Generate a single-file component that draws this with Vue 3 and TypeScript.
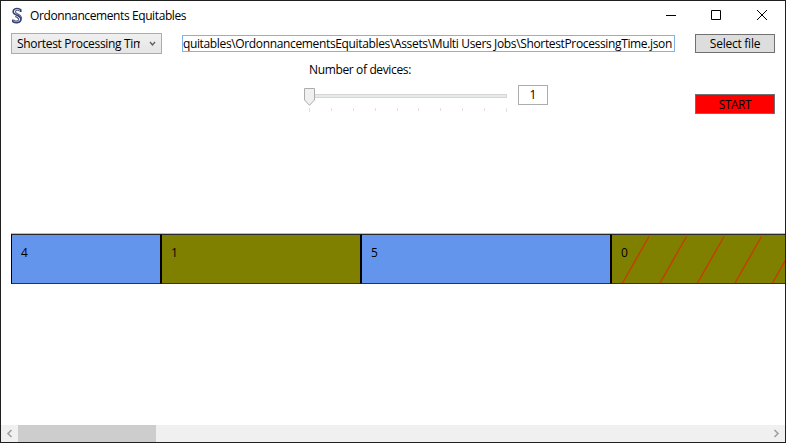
<script setup lang="ts">
import { ref } from 'vue'

interface Job {
  id: number
  width: number
  color: 'blue' | 'olive'
  hatched?: boolean
}

const title = 'Ordonnancements Equitables'
const algorithm = ref('Shortest Processing Time')
const path = ref('quitables\\OrdonnancementsEquitables\\Assets\\Multi Users Jobs\\ShortestProcessingTime.json')
const devices = ref(1)
const ticks = Array.from({ length: 10 }, (_, i) => i)
const jobs: Job[] = [
  { id: 4, width: 150, color: 'blue' },
  { id: 1, width: 200, color: 'olive' },
  { id: 5, width: 250, color: 'blue' },
  { id: 0, width: 200, color: 'olive', hatched: true },
]
const hatches = [0, 1, 2, 3, 4]
</script>

<template>
  <div class="window">
    <header class="titlebar">
      <svg class="logo" width="12" height="18" viewBox="0 0 12 18">
        <path class="outer" d="M9.8 5V2.8C8 1 4 1 2.6 3C1.4 5.2 2.6 6.8 5 7.8C8.6 9.2 10.6 10.6 9.8 13.4C8.6 16.2 4 16.2 1.8 14.6V12.6" />
        <path class="inner" d="M8.8 4.2C7 2.8 4.8 3 4.4 4.6C4.2 6 6 6.6 7.8 7.6C10 9 11 10.6 10.4 12.6M2.6 13C4 14.6 6.8 14.4 7.6 12.8C8 11.2 6 10.2 4.2 9.4" />
      </svg>
      <span class="text title">{{ title }}</span>
      <div class="controls">
        <svg width="46" height="29" viewBox="0 0 46 29"><path d="M11 14.5H21" /></svg>
        <svg width="46" height="29" viewBox="0 0 46 29"><path d="M10.5 9.5H19.5V18.5H10.5Z" /></svg>
        <svg width="38" height="29" viewBox="0 0 38 29"><path d="M10 9L20 19M20 9L10 19" /></svg>
      </div>
    </header>

    <div class="toolbar">
      <div class="combo">
        <span class="clip"><span class="text algorithm">{{ algorithm }}</span></span>
        <svg width="7" height="6" viewBox="0 0 7 6"><path d="M1 1L3.5 4L6 1" /></svg>
      </div>
      <div class="pathbox"><span class="text path">{{ path }}</span></div>
      <button class="button"><span class="text select">Select file</span></button>
    </div>

    <div class="settings">
      <div class="devices">
        <span class="text label">Number of devices:</span>
        <div class="sliderrow">
          <div class="slider">
            <div class="railrow">
              <svg class="thumb" width="11" height="18" viewBox="0 0 11 18"><path d="M.5 .5H10.5V12L5.5 17.3L.5 12Z" /></svg>
              <div class="rail"></div>
            </div>
            <div class="ticks"><i v-for="t in ticks" :key="t"></i></div>
          </div>
          <div class="number text">{{ devices }}</div>
        </div>
      </div>
      <button class="button start"><span class="text starttext">START</span></button>
    </div>

    <main class="timeline">
      <div v-for="job in jobs" :key="job.id" class="job" :class="job.color" :style="{ width: job.width + 'px' }">
        <span class="text jobid">{{ job.id }}</span>
        <svg v-if="job.hatched" class="hatch" width="198" height="48" viewBox="0 0 198 48">
          <path v-for="h in hatches" :key="h" :d="`M${10.5 + h * 37.5} 48L${37 + h * 37.5} 1.5`" />
        </svg>
      </div>
    </main>

    <footer class="scrollbar">
      <svg width="17" height="17" viewBox="0 0 17 17"><path d="M10.5 5L7 8.5L10.5 12" /></svg>
      <div class="scrollthumb"></div>
      <svg class="right" width="17" height="17" viewBox="0 0 17 17"><path d="M6.5 5L10 8.5L6.5 12" /></svg>
    </footer>
  </div>
</template>

<style>
body {
  margin: 0;
  overflow: hidden;
}
</style>

<style scoped>
.window {
  box-sizing: border-box;
  width: 786px;
  height: 443px;
  border: 1px solid #202020;
  background: #fff;
  display: flex;
  flex-direction: column;
  overflow: hidden;
  color: #000;
}
svg {
  display: block;
  flex: none;
  fill: none;
}
.text {
  font-family: "Open Sans", "Noto Sans", sans-serif;
  font-size: 12px;
  line-height: 16px;
  white-space: pre;
}
.titlebar {
  height: 32px;
  flex: none;
  display: flex;
  align-items: flex-start;
  padding-left: 10px;
}
.logo {
  margin-top: 6px;
}
.outer {
  stroke: #35406f;
  stroke-width: 1.6;
}
.inner {
  stroke: #56608c;
  stroke-width: 1.2;
}
.title {
  margin: 7px 0 0 7px;
  letter-spacing: -0.4px;
}
.controls {
  display: flex;
  margin-left: auto;
}
.controls path {
  stroke: #000;
}
.toolbar {
  height: 21px;
  flex: none;
  display: flex;
  align-items: center;
  padding: 0 10px;
}
.combo {
  box-sizing: border-box;
  width: 151px;
  height: 21px;
  border: 1px solid #acacac;
  background: linear-gradient(#f0f0f0, #e5e5e5);
  display: flex;
  align-items: center;
  padding: 0 5px;
  justify-content: space-between;
}
.combo path {
  stroke: #606060;
  stroke-width: 1.4;
}
.clip {
  width: 123px;
  overflow: hidden;
  display: flex;
}
.algorithm {
  letter-spacing: -0.32px;
}
.pathbox {
  box-sizing: border-box;
  width: 493px;
  height: 17px;
  margin: 0 20px;
  border: 1px solid #7eb4ea;
  display: flex;
  align-items: center;
  justify-content: flex-end;
  padding-right: 2px;
  overflow: hidden;
}
.path {
  letter-spacing: -0.35px;
}
.button {
  box-sizing: border-box;
  width: 80px;
  height: 19px;
  padding: 0;
  border: 1px solid #707070;
  border-radius: 0;
  background: #ddd;
  color: #000;
  display: flex;
  align-items: center;
  justify-content: center;
}
.select {
  letter-spacing: -0.25px;
}
.starttext {
  letter-spacing: -0.5px;
}
.settings {
  height: 180px;
  flex: none;
  display: flex;
  justify-content: space-between;
  padding: 8px 10px 0 303px;
  box-sizing: border-box;
}
.devices {
  display: flex;
  flex-direction: column;
}
.label {
  margin-left: 5px;
  letter-spacing: -0.36px;
}
.sliderrow {
  display: flex;
  align-items: flex-start;
  margin-top: 7px;
}
.slider {
  width: 203px;
  margin-top: 3px;
}
.railrow {
  display: flex;
  height: 18px;
}
.thumb path {
  fill: #f0f0f0;
  stroke: #acacac;
}
.rail {
  box-sizing: border-box;
  flex: 1;
  height: 4px;
  margin-top: 6px;
  border: 1px solid #d6d6d6;
  border-left: 0;
  background: #e7eaea;
}
.ticks {
  display: flex;
  justify-content: space-between;
  height: 4px;
  margin: 2px 0 0 5px;
}
.ticks i {
  width: 1px;
  height: 3px;
  background: #e0e0e0;
}
.ticks i:first-child,
.ticks i:last-child {
  height: 4px;
}
.number {
  box-sizing: border-box;
  width: 30px;
  height: 20px;
  margin-left: 11px;
  border: 1px solid #acacac;
  text-align: center;
  line-height: 18px;
}
.start {
  height: 20px;
  margin-top: 32px;
  padding-top: 2px;
  background: #f00;
}
.timeline {
  height: 191px;
  flex: none;
  display: flex;
  padding-left: 10px;
}
.job {
  box-sizing: border-box;
  height: 50px;
  flex: none;
  border: 1px solid #000;
  border-top-color: #292929;
  border-bottom-color: #333;
  box-shadow: 0 -1px #bdbdbd;
  display: grid;
}
.blue {
  background: #6495ed;
}
.olive {
  background: #808000;
}
.jobid {
  grid-area: 1 / 1;
  margin: 10px 0 0 9px;
}
.hatch {
  grid-area: 1 / 1;
}
.hatch path {
  stroke: #ff0000;
  stroke-opacity: 0.5;
  stroke-width: 1.5;
}
.scrollbar {
  height: 17px;
  flex: none;
  display: flex;
  background: #f0f0f0;
}
.scrollbar path {
  stroke: #a0a0a0;
  stroke-width: 1.6;
}
.scrollthumb {
  width: 138px;
  background: #cdcdcd;
}
.right {
  margin-left: auto;
}
</style>
